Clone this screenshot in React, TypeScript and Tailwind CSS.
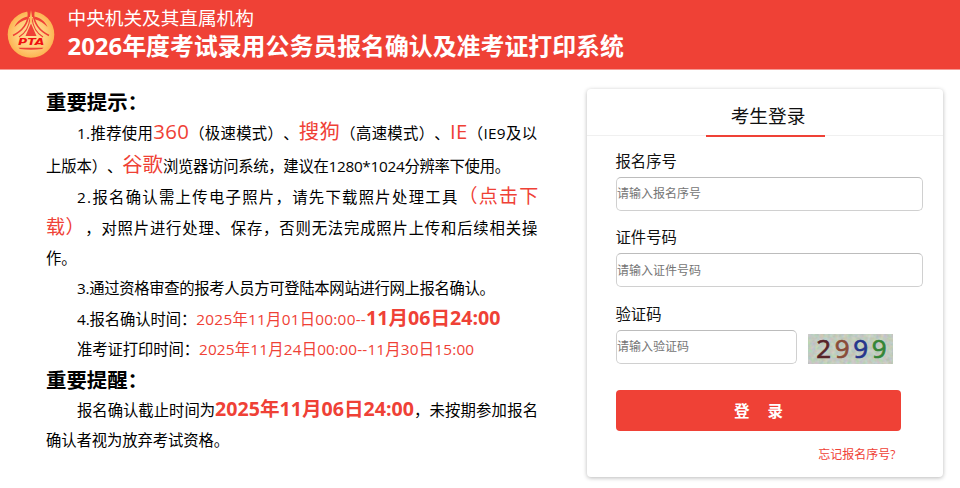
import type { ReactNode } from "react";
import clsx from "clsx";

function Logo() {
  return (
    <svg viewBox="0 0 48 50" className="h-[50px] w-12 shrink-0" aria-label="PTA">
      <defs>
        <radialGradient id="gold" cx="0.5" cy="0.5" r="0.5">
          <stop offset="0" stopColor="#ffe09a" />
          <stop offset="0.6" stopColor="#ffcf7c" />
          <stop offset="1" stopColor="#fdb452" />
        </radialGradient>
      </defs>
      <circle cx="24" cy="25.5" r="23.3" fill="url(#gold)" />
      <path d="M20 1 H28 L26.8 8 H21.2 Z" fill="#ef4136" />
      <path d="M7.5 18 C10 12 15 8.5 20.8 7.5 L20.3 10.3 C15 11.5 11 14.5 7.5 18 Z" fill="#ef4136" />
      <path d="M40.5 18 C38 12 33 8.5 27.2 7.5 L27.7 10.3 C33 11.5 37 14.5 40.5 18 Z" fill="#ef4136" />
      <g fill="none" stroke="#ef4136">
        <path d="M21.6 5 C21 14 15 22 6 26.5" strokeWidth="1.6" />
        <path d="M26.4 5 C27 14 33 22 42 26.5" strokeWidth="1.6" />
        <path d="M23 9 C22.2 17 18 24.5 12 28" strokeWidth="1.1" />
        <path d="M25 9 C25.8 17 30 24.5 36 28" strokeWidth="1.1" />
      </g>
      <path d="M24 1 L22.6 10 L23.4 14 H24.6 L25.4 10 Z" fill="#fdbf62" />
      <path d="M24 14.5 L29.5 27 H18.5 Z" fill="#ef4136" />
      <path d="M11.5 38.8 H36.5 L35 40 Q24 41.6 13 40 Z" fill="#ef4136" />
      <text
        x="11"
        y="36.4"
        textLength="26.5"
        lengthAdjust="spacingAndGlyphs"
        fill="#f01010"
        className="font-['DejaVu_Sans'] text-[9.5px] font-bold italic"
      >
        PTA
      </text>
    </svg>
  );
}

function Line({ className, children }: { className?: string; children: ReactNode }) {
  return (
    <div className={clsx("flex items-baseline whitespace-pre text-[15.35px]", className)}>
      {children}
    </div>
  );
}

function Red({ className, children }: { className?: string; children: ReactNode }) {
  return <span className={clsx("text-[#ef4136]", className)}>{children}</span>;
}

function Notice() {
  return (
    <section className="ml-[46px] mt-[17px] w-[492px] shrink-0 text-black">
      <h2 className="h-[30px] text-[20.4px] font-bold leading-[30px]">重要提示：</h2>
      <Line className="h-[33px] pl-[31px] leading-[29px] tracking-[0.33px]">
        <span>1.推荐使用</span>
        <Red className="text-[20.4px]">360</Red>
        <span>（极速模式）、</span>
        <Red className="text-[20.4px]">搜狗</Red>
        <span>（高速模式）、</span>
        <Red className="text-[20.4px]">IE</Red>
        <span>（IE9及以</span>
      </Line>
      <Line className="h-8 leading-[29px]">
        <span className="tracking-[-0.1px]">上版本）、</span>
        <Red className="text-[20.4px]">谷歌</Red>
        <span className="tracking-[-0.3px]">浏览器访问系统，建议在1280*1024分辨率下使用。</span>
      </Line>
      <Line className="h-[30px] pl-[31px] leading-[28px]">
        <span className="tracking-[1.3px]">2.报名确认需上传电子照片，请先下载照片处理工具</span>
        <Red className="text-[19px] tracking-[1.2px]">（点击下</Red>
      </Line>
      <Line className="h-8 leading-[31px]">
        <Red className="text-[19px] tracking-[0.6px]">载）</Red>
        <span className="tracking-[0.83px]">，对照片进行处理、保存，否则无法完成照片上传和后续相关操</span>
      </Line>
      <Line className="h-[29px] leading-[29px]">作。</Line>
      <Line className="h-[30px] pl-[31px] leading-[30px] tracking-[-0.33px]">
        3.通过资格审查的报考人员方可登陆本网站进行网上报名确认。
      </Line>
      <Line className="h-[31px] pl-[31px] leading-[30px]">
        <span className="tracking-[-0.1px]">4.报名确认时间：</span>
        <Red className="tracking-[0.25px]">2025年11月01日00:00--</Red>
        <Red className="text-[19.6px] font-bold">11月06日24:00</Red>
      </Line>
      <Line className="h-[30px] pl-[31px] leading-[30px]">
        <span className="tracking-[-0.1px]">准考证打印时间：</span>
        <Red className="tracking-[0.18px]">2025年11月24日00:00--11月30日15:00</Red>
      </Line>
      <h2 className="h-[31px] text-[20.4px] font-bold leading-[32px]">重要提醒：</h2>
      <Line className="h-[30px] pl-[31px] leading-[28px]">
        <span>报名确认截止时间为</span>
        <Red className="text-[19.6px] font-bold">2025年11月06日24:00</Red>
        <span className="tracking-[0.2px]">，未按期参加报名</span>
      </Line>
      <Line className="h-[30px] leading-[30px] tracking-[-0.1px]">确认者视为放弃考试资格。</Line>
    </section>
  );
}

function Field({ label, placeholder, children }: { label: string; placeholder: string; children?: ReactNode }) {
  return (
    <div className="mb-[17.5px]">
      <label className="-ml-[0.5px] block h-[25px] text-[15.35px] leading-[18px] text-[#111]">{label}</label>
      <div className="flex">
        <input
          placeholder={placeholder}
          className={clsx(
            "h-[34px] rounded-[5px] border border-[#d0d0d0] border-t-[#bcbcbc] bg-white text-[12px] text-black outline-none placeholder:text-[#757575]",
            children ? "w-[181px]" : "w-[307px]"
          )}
        />
        {children}
      </div>
    </div>
  );
}

function Captcha() {
  return (
    <svg viewBox="0 0 85 30" className="ml-[11px] mt-1 h-[30px] w-[85px] overflow-visible">
      <filter id="noise" x="0" y="0" width="100%" height="100%" colorInterpolationFilters="sRGB">
        <feTurbulence type="fractalNoise" baseFrequency="0.25" numOctaves="2" seed="4" />
        <feColorMatrix values="0.2 0 0 0 0.66  0 0.15 0 0 0.72  0 0 0.2 0 0.65  0 0 0 0 1" />
      </filter>
      <rect width="85" height="30" fill="#bfcebf" />
      <rect width="85" height="30" filter="url(#noise)" />
      <g className="font-['Open_Sans'] text-[26px]" strokeWidth="0.7">
        <text x="8.2" y="24.2" fill="#572428" stroke="#572428">2</text>
        <text x="26.8" y="24.2" fill="#8a4c38" stroke="#8a4c38">9</text>
        <text x="45.3" y="24.2" fill="#26358c" stroke="#26358c">9</text>
        <text x="63.8" y="24.2" fill="#348537" stroke="#348537">9</text>
      </g>
    </svg>
  );
}

function LoginCard() {
  return (
    <section className="ml-[49px] mt-[19px] h-[388px] w-[356px] shrink-0 rounded bg-white shadow-[0_1px_4px_0_rgba(0,0,0,0.28)]">
      <div className="flex h-[47px] justify-center border-b border-[#f0f0f0]">
        <h1 className="h-[48px] w-[119px] border-b-2 border-[#ef4136] pl-[6px] pt-[13px] text-center text-[18.7px] leading-[28px] text-[#111]">
          考生登录
        </h1>
      </div>
      <form className="pl-[29px] pt-[15.5px]">
        <Field label="报名序号" placeholder="请输入报名序号" />
        <Field label="证件号码" placeholder="请输入证件号码" />
        <Field label="验证码" placeholder="请输入验证码">
          <Captcha />
        </Field>
        <button
          type="button"
          className="mt-[26px] block h-[41px] w-[285px] rounded bg-[#ef4136] pt-[3px] text-[15.5px] font-bold text-white"
        >
          登<span className="inline-block w-[18px]" />录
        </button>
        <a className="mt-[14px] block w-[279.5px] text-right text-[12px] leading-[19px] text-[#ef4136]">忘记报名序号?</a>
      </form>
    </section>
  );
}

export default function App() {
  return (
    <div className="h-[488px] w-[960px] overflow-hidden bg-white font-['Open_Sans','Noto_Sans_CJK_SC',sans-serif] [text-spacing-trim:space-all]">
      <header className="flex h-[70px] border-b border-[#f59a94] bg-[#ef4136] pl-[7px] pt-[9px] text-white">
        <Logo />
        <div className="-mt-[4px] ml-[12.5px] whitespace-nowrap">
          <p className="text-[18.65px] leading-[25px]">中央机关及其直属机构</p>
          <p className="text-[23.9px] font-bold leading-[32px]">2026年度考试录用公务员报名确认及准考证打印系统</p>
        </div>
      </header>
      <main className="flex items-start">
        <Notice />
        <LoginCard />
      </main>
    </div>
  );
}
